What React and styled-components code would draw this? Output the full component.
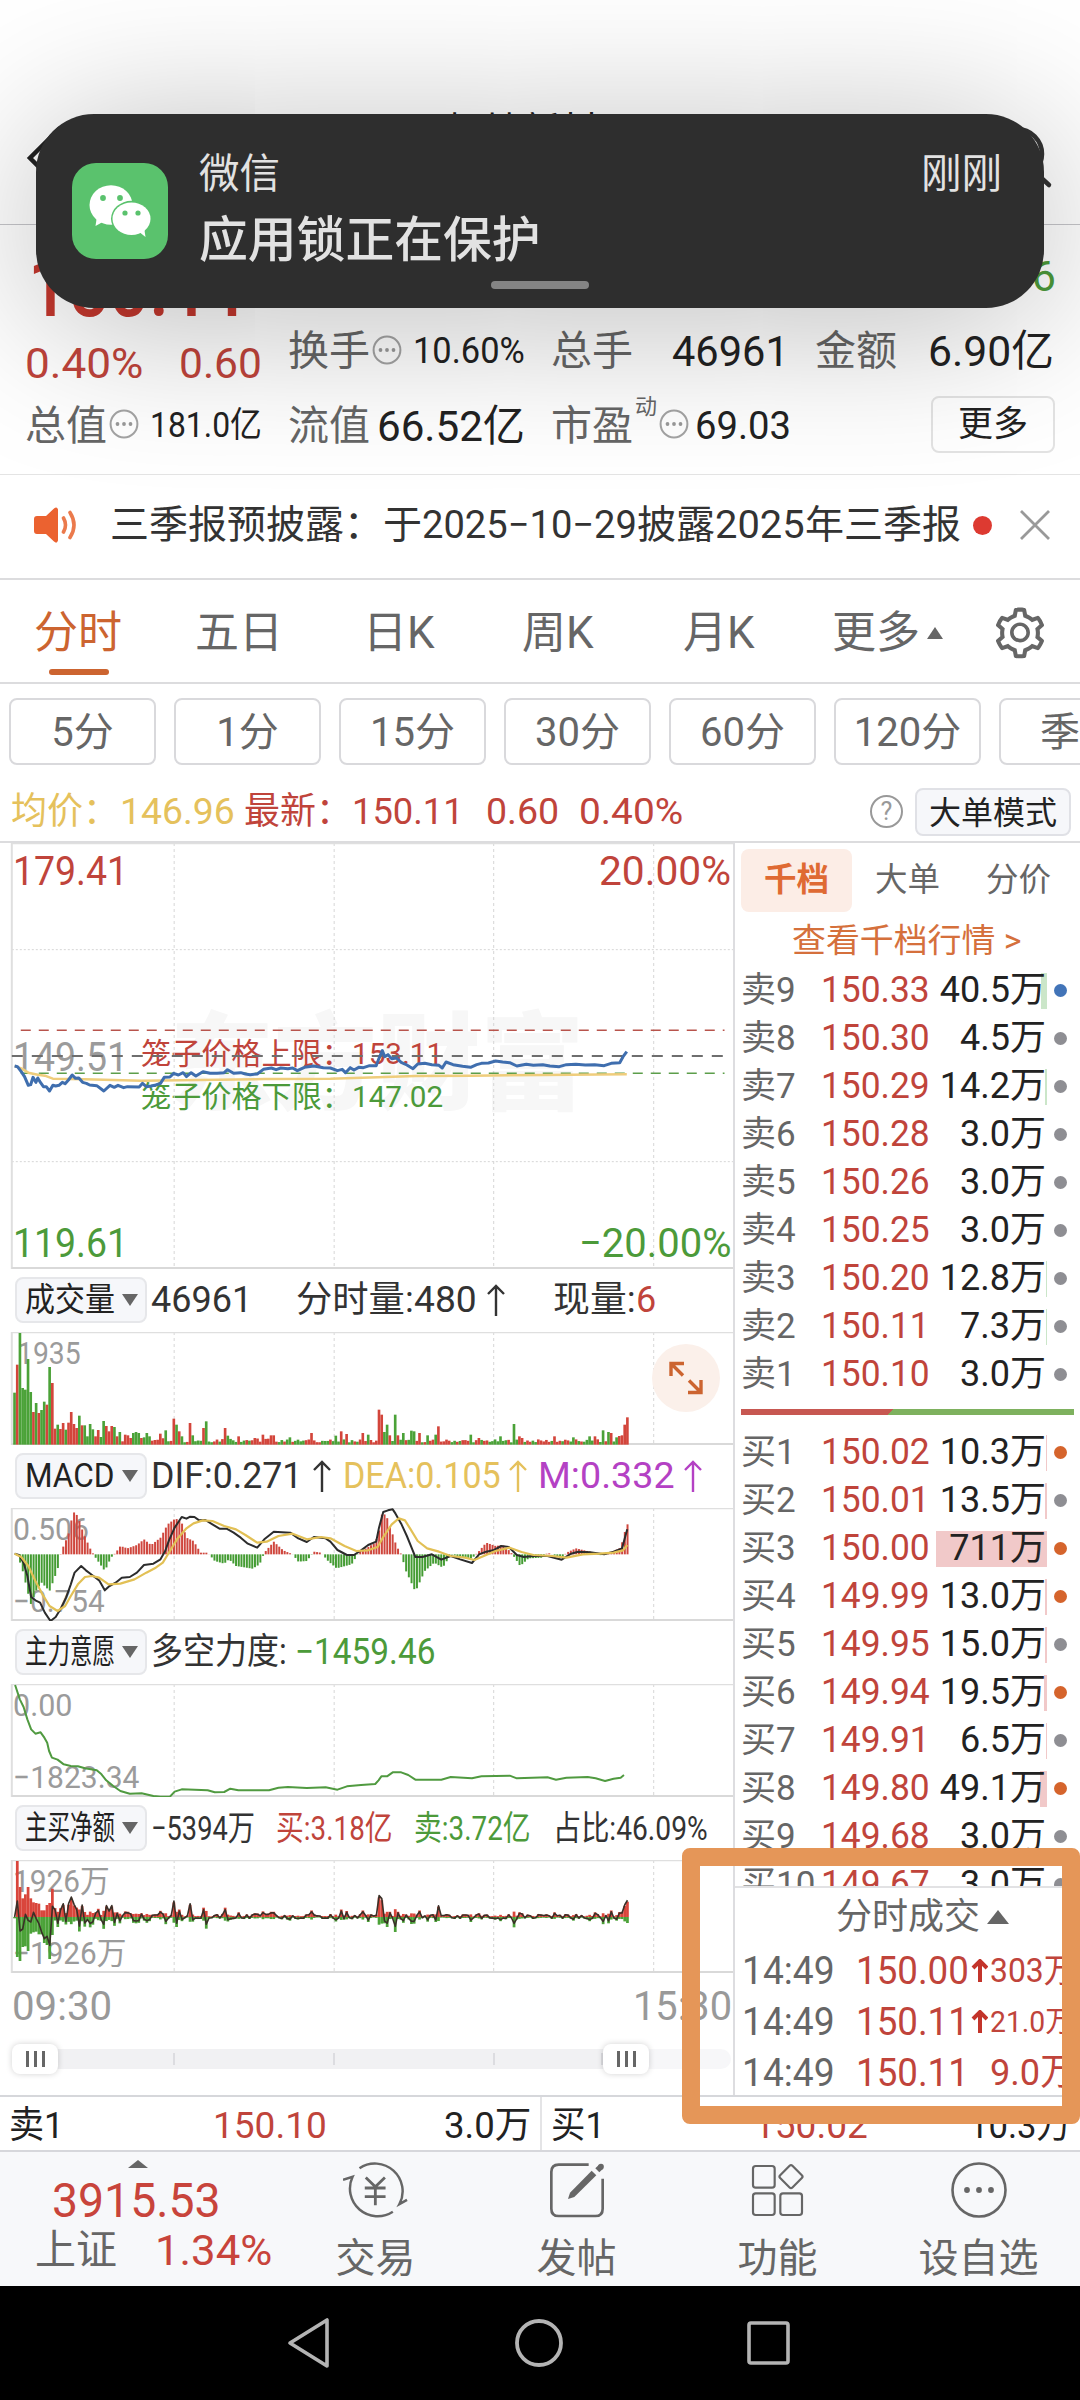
import { useLayoutEffect, useRef } from "react";
import styled, { createGlobalStyle } from "styled-components";
import { AiOutlineSetting } from "react-icons/ai";

const RED = "#c0443b";
const GREEN = "#4c9a3a";
const YELLOW = "#e5c15c";
const PURPLE = "#b441c4";
const ORANGE = "#cc6430";

const GlobalStyle = createGlobalStyle`
  * { box-sizing: border-box; }
  body {
    margin: 0;
    background: #fff;
    color: #222;
    font-family: Roboto, "Noto Sans CJK SC", sans-serif;
  }
`;

const Page = styled.div`
  position: relative;
  width: 1080px;
  height: 2400px;
  overflow: hidden;
  display: flex;
  flex-direction: column;
  background: #fff;
`;

/* ---------- text that is squeezed to a given width ---------- */

const FitBox = styled.span`
  display: inline-block;
  flex: none;
  width: ${(p) => p.$w}px;
  margin-left: ${(p) => p.$ml || 0}px;
  font-size: ${(p) => (p.$size ? p.$size + "px" : "inherit")};
  color: ${(p) => p.$color || "inherit"};
  font-weight: ${(p) => p.$weight || "inherit"};
  white-space: nowrap;
`;

const FitInner = styled.span`
  display: inline-block;
  transform-origin: 0 50%;
`;

function Fit({ w, ml, size, color, weight, children }) {
  const ref = useRef(null);
  useLayoutEffect(() => {
    const el = ref.current;
    el.style.transform = `translateX(-1px) scaleX(${w / el.offsetWidth})`;
  }, [w, children]);
  return (
    <FitBox $w={w} $ml={ml} $size={size} $color={color} $weight={weight}>
      <FitInner ref={ref}>{children}</FitInner>
    </FitBox>
  );
}

/* ---------- title bar ---------- */

const TitleBar = styled.header`
  flex: none;
  height: 225px;
  padding: 95px 27px 0 26px;
  display: flex;
  justify-content: space-between;
  align-items: flex-start;
  border-bottom: 1px solid #c6c6ca;
`;

const Title = styled.h1`
  margin: 11px 0 0;
  padding-right: 4px;
  font-size: 38px;
  line-height: 50px;
  font-weight: 400;
`;

/* ---------- quote ---------- */

const Quote = styled.section`
  flex: none;
  height: 250px;
  padding: 0 24px 0 26px;
  border-bottom: 1px solid #e4e4e4;
`;

const PriceRow = styled.div`
  display: flex;
  justify-content: space-between;
  height: 101px;
`;

const BigPrice = styled.div`
  padding: 16px 0 0 3px;
  line-height: 94px;
  color: #c5382e;
  font-weight: 500;
`;

const High = styled.div`
  padding-top: 26px;
  font-size: 43px;
  line-height: 50px;
  color: ${GREEN};
`;

const StatGrid = styled.div`
  display: grid;
  grid-template-columns: 237px 237px 238px 239px;
  column-gap: 26px;
  grid-template-rows: 50px 99px;
`;

const Stat = styled.div`
  display: flex;
  align-items: center;
  justify-content: ${(p) => (p.$start ? "flex-start" : "space-between")};
  padding-top: ${(p) => p.$pad || 0}px;
  font-size: ${(p) => p.$size || 43}px;
  line-height: 50px;
  color: ${(p) => p.$color || "#222"};
  white-space: nowrap;
`;

const Label = styled.span`
  display: flex;
  align-items: center;
  gap: 2px;
  margin-left: -1px;
  font-size: 41px;
  color: #666;

  svg {
    margin-top: -3px;
  }
`;

const Sup = styled.sup`
  font-size: 22px;
  line-height: 22px;
  margin: -38px 0 0 0;
`;

const MoreButton = styled.button`
  width: 124px;
  height: 57px;
  margin-left: auto;
  margin-top: -2px;
  border: 2px solid #e3e3e3;
  border-radius: 8px;
  background: transparent;
  font: inherit;
  font-size: 35px;
  color: #222;
  padding: 0;
`;

/* ---------- notice ---------- */

const Notice = styled.div`
  flex: none;
  height: 105px;
  padding: 0 28px 3px 33px;
  display: flex;
  align-items: center;
  border-bottom: 2px solid #dcdcde;
  color: #333;
  font-size: 39px;
  line-height: 50px;
`;

const Dot = styled.i`
  width: 19px;
  height: 19px;
  margin: 0 auto 0 11px;
  border-radius: 50%;
  background: #dd3a31;
`;

/* ---------- period tabs ---------- */

const Tabs = styled.nav`
  flex: none;
  height: 104px;
  padding: 3px 0 0 34px;
  display: flex;
  align-items: center;
  border-bottom: 2px solid #dcdcde;
  color: #666;
`;

const Tab = styled.div`
  position: relative;
  width: ${(p) => p.$w}px;
  display: flex;
  align-items: center;
  font-size: 44px;
  line-height: 60px;
  color: ${(p) => (p.$on ? ORANGE : "#666")};
  white-space: nowrap;

  &::after {
    content: "";
    display: ${(p) => (p.$on ? "block" : "none")};
    position: absolute;
    left: 15px;
    bottom: -12px;
    width: 60px;
    height: 6px;
    border-radius: 3px;
    background: ${ORANGE};
  }
`;

const Tri = styled.i`
  display: inline-block;
  flex: none;
  border: ${(p) => p.$half}px solid transparent;
  border-top: ${(p) => (p.$down ? `${p.$h}px solid #666` : 0)};
  border-bottom: ${(p) => (p.$down ? 0 : `${p.$h}px solid #666`)};
  margin-left: ${(p) => p.$ml || 0}px;
`;

const Chips = styled.div`
  flex: none;
  height: 98px;
  padding: 14px 0 0 9px;
  display: flex;
  gap: 18px;
  overflow: hidden;
`;

const Chip = styled.div`
  flex: none;
  width: 147px;
  height: 67px;
  border: 2px solid #d9d9dc;
  border-radius: 8px;
  font-size: 40px;
  line-height: 65px;
  text-align: center;
  color: #666;
`;

const AvgRow = styled.div`
  flex: none;
  height: 61px;
  padding: 0 9px 0 12px;
  display: flex;
  align-items: center;
  font-size: 37px;
  line-height: 50px;
  color: ${RED};
  border-bottom: 2px solid #dcdcde;
`;

const Help = styled.span`
  width: 33px;
  height: 33px;
  margin-left: auto;
  border: 2px solid #999;
  border-radius: 50%;
  font-size: 25px;
  line-height: 29px;
  text-align: center;
  color: #999;
`;

const ModeButton = styled.span`
  width: 156px;
  height: 48px;
  margin-left: 12px;
  border: 2px solid #e0e1e6;
  border-radius: 8px;
  background: #f6f7fa;
  font-size: 32px;
  line-height: 46px;
  text-align: center;
  color: #222;
`;

/* ---------- main: charts and order book ---------- */

const Main = styled.main`
  flex: none;
  height: 1254px;
  display: flex;
  border-bottom: 2px solid #d6d7db;
`;

const Charts = styled.section`
  width: 735px;
  display: flex;
  flex-direction: column;
  border-right: 2px solid #dddde0;
`;

const ChartBox = styled.div`
  position: relative;
  flex: none;
  height: ${(p) => p.$h}px;

  svg {
    position: relative;
    display: block;
  }
`;

const Watermark = styled.div`
  position: absolute;
  left: 171px;
  top: 142px;
  font-family: "Noto Sans CJK SC", sans-serif;
  font-size: 106px;
  line-height: 140px;
  font-weight: 900;
  color: #f7f7f7;
  white-space: nowrap;
`;

const Mark = styled.span`
  position: absolute;
  left: ${(p) => (p.$right ? "auto" : (p.$x || 14) + "px")};
  right: ${(p) => (p.$right ? "1px" : "auto")};
  top: ${(p) => p.$y}px;
  font-size: ${(p) => p.$size || 31}px;
  line-height: 40px;
  color: ${(p) => p.$color || "#9b9b9b"};
  white-space: nowrap;
`;

const Expand = styled.span`
  position: absolute;
  right: 13px;
  top: 12px;
  width: 68px;
  height: 68px;
  border-radius: 50%;
  background: #fbf0ea;
  display: grid;
  place-items: center;
`;

const Legend = styled.div`
  flex: none;
  height: 63px;
  padding: 8px 0 9px 15px;
  display: flex;
  align-items: center;
  font-size: ${(p) => p.$size || 36}px;
  line-height: 46px;
  color: #333;
`;

const Select = styled.span`
  width: 132px;
  height: 46px;
  margin-right: 5px;
  padding: 0 7px 0 9px;
  display: flex;
  align-items: center;
  justify-content: space-between;
  border: 2px solid #e6e7ea;
  border-radius: 8px;
  background: #f6f7fa;
  font-size: 33px;
  line-height: 42px;
  color: #222;
`;

const TimeAxis = styled.div`
  flex: none;
  height: 66px;
  padding: 5px 0 0 13px;
  display: flex;
  justify-content: space-between;
  font-size: 41px;
  line-height: 56px;
  color: #999;
`;

const Slider = styled.div`
  height: 20px;
  margin: 10px 2px 0 12px;
  display: flex;
  align-items: center;
  border-radius: 10px;
  background: linear-gradient(90deg, #f1f1f3 0 614px, #f7f7f9 614px);
`;

const Knob = styled.span`
  width: 46px;
  height: 30px;
  border-radius: 8px;
  background: #fff;
  box-shadow: 0 0 6px rgba(0, 0, 0, 0.18);
  display: flex;
  align-items: center;
  justify-content: center;
  gap: 5px;

  i {
    width: 3px;
    height: 16px;
    background: #666;
  }
`;

const Tick = styled.i`
  width: 2px;
  height: 12px;
  margin-left: ${(p) => p.$ml}px;
  background: #dcdce0;
`;

const Book = styled.aside`
  width: 345px;
  display: flex;
  flex-direction: column;
`;

const BookTabs = styled.div`
  flex: none;
  height: 65px;
  padding: 6px 15px 0 6px;
  display: grid;
  grid-template-columns: repeat(3, 111px);
`;

const BookTab = styled.span`
  border-radius: 8px;
  font-size: 32.5px;
  line-height: 63px;
  text-align: center;
  color: ${(p) => (p.$on ? "#df6a33" : "#666")};
  font-weight: ${(p) => (p.$on ? 700 : 400)};
  background: ${(p) => (p.$on ? "#fcede6" : "transparent")};
`;

const BookLink = styled.div`
  flex: none;
  height: 58px;
  padding-left: 58px;
  font-size: 33px;
  line-height: 66px;
  color: #d5703c;
`;

const Levels = styled.div`
  flex: 1;
  min-height: 0;
  overflow: hidden;
`;

const Level = styled.div`
  height: 48px;
  padding-left: 6px;
  display: grid;
  grid-template-columns: 81px 112px 113px 1fr;
  align-items: center;
  font-size: 36px;
  line-height: 49px;
  white-space: nowrap;
`;

const LevelName = styled.span`
  font-size: 35px;
  color: #666;
`;

const Qty = styled.span`
  height: 36px;
  padding-right: 1px;
  display: flex;
  align-items: center;
  justify-content: flex-end;
  background: linear-gradient(${(p) => p.$bg}, ${(p) => p.$bg}) no-repeat right / ${(p) => p.$bar}px 100%;
`;

const State = styled.i`
  width: 13px;
  height: 13px;
  margin-left: 7px;
  border-radius: 50%;
  background: ${(p) => p.$c};
`;

const Ratio = styled.div`
  height: 6px;
  margin: 11px 6px 13px;
  background: linear-gradient(135deg, #c75751 0 108px, #7eb15e 108px);
`;

const Trades = styled.div`
  flex: none;
  height: 209px;
  border-top: 2px solid #e2e2e4;
`;

const TradesHead = styled.div`
  height: 57px;
  padding-left: 102px;
  display: flex;
  align-items: center;
  font-size: 36px;
  line-height: 50px;
  color: #666;
`;

const Trade = styled.div`
  height: 51px;
  padding-left: 8px;
  display: flex;
  align-items: center;
  font-size: 38px;
  line-height: 50px;
  color: ${RED};
  overflow: hidden;
`;

/* ---------- bottom ---------- */

const BestRow = styled.div`
  flex: none;
  height: 55px;
  display: flex;
  border-bottom: 2px solid #d6d7db;
`;

const Best = styled.div`
  width: 540px;
  padding: 5px 8px 0 10px;
  display: flex;
  justify-content: space-between;
  align-items: center;
  font-size: 37px;
  line-height: 50px;

  & + & {
    border-left: 2px solid #e4e4e6;
  }
`;

const BottomNav = styled.nav`
  flex: none;
  height: 134px;
  display: grid;
  grid-template-columns: 275px repeat(4, 201px);
  background: #f7f8fa;
`;

const NavItem = styled.div`
  display: flex;
  flex-direction: column;
  align-items: center;
  padding-top: 8px;
  font-size: 40px;
  line-height: 54px;
  color: #666;

  svg {
    height: 60px;
    margin-bottom: 12px;
  }
`;

const IndexItem = styled.div`
  display: flex;
  flex-direction: column;
  align-items: center;
  padding-top: 8px;
  color: #c8443b;
`;

const IndexLine = styled.div`
  display: flex;
  align-items: center;
  padding-left: ${(p) => p.$pl || 0}px;
  font-size: ${(p) => p.$size}px;
  height: ${(p) => p.$h}px;
  line-height: 50px;
`;

const SystemBar = styled.footer`
  flex: 1;
  background: #000;
  padding: 30px 289px 0 287px;
  display: flex;
  justify-content: space-between;
`;

/* ---------- overlays ---------- */

const Toast = styled.div`
  position: absolute;
  left: 36px;
  top: 114px;
  width: 1008px;
  height: 194px;
  padding: 0 42px 0 36px;
  display: flex;
  align-items: center;
  border-radius: 58px;
  background: #2e2e2e;
  color: #e2e2e2;
  box-shadow: 0 14px 160px rgba(0, 0, 0, 0.28);
`;

const AppIcon = styled.span`
  width: 96px;
  height: 96px;
  border-radius: 24px;
  background: #5ac26d;
  overflow: hidden;
`;

const ToastBody = styled.div`
  flex: 1;
  padding: 0 0 0 31px;
`;

const ToastTop = styled.div`
  display: flex;
  justify-content: space-between;
  font-size: 40.5px;
  line-height: 60px;
`;

const ToastText = styled.div`
  font-size: 48.8px;
  line-height: 74px;
  font-weight: 500;
`;

const Grip = styled.i`
  position: absolute;
  left: 455px;
  bottom: 19px;
  width: 98px;
  height: 8px;
  border-radius: 4px;
  background: #848484;
`;

const Highlight = styled.div`
  position: absolute;
  left: 682px;
  top: 1848px;
  width: 398px;
  height: 276px;
  border: 18px solid #e59658;
  border-radius: 8px;
`;

/* ---------- chart data, in plot units ---------- */

const STEP = 5.72;
const COUNT = 228;
const GRID_X = [369, 708, 1046, 1385];

// negative values are falling minutes
const OPEN_VOLUME = [
  -156, 240, -335, -170, -165, -257, -158, 98, -125, 95, -104, -129, 120, -233, 185, 48, -60, 47, 65, -45, 66, 98,
  62, 50, -87, 58, -58, -25, -62, -46, 25, 44, -23, -71, 56, 40, 56, -53, 25, -38, 10, 30, 28, 20, -35, -38, -35, 20,
  -22, -35, -25, 12, 14,
];

const PEAKS = [
  [340, 33], [351, -43], [369, 78], [375, -60], [381, 40], [387, -25], [403, 65], [409, -28], [431, 50], [437, -70],
  [477, 50], [483, -27], [505, 25], [556, 30], [573, 28], [579, 28], [616, -22], [662, 35], [713, -27], [725, 40],
  [736, 32], [770, 35], [781, -30], [803, 105], [809, 90], [815, -38], [820, -60], [826, 28], [838, -90], [843, 28],
  [855, -35], [872, -42], [878, -40], [889, 35], [906, -28], [923, -30], [928, 55], [997, -30], [1012, 20],
  [1063, -25], [1091, -62], [1102, 25], [1108, 20], [1176, 25], [1216, -22], [1250, -25], [1261, 25], [1278, -43],
  [1289, -38], [1295, 35], [1306, -22], [1312, 26], [1318, 28], [1323, 60], [1328, 82],
];

function noise(i) {
  const n = Math.sin(i * 12.9898) * 43758.5453;
  return n - Math.floor(n);
}

const VOLUME = Array.from({ length: COUNT }, (_, i) => {
  if (i < OPEN_VOLUME.length) return OPEN_VOLUME[i];
  const size = 7 + noise(i) * (i < 100 ? 14 : 9);
  return noise(i + 500) > 0.5 ? size : -size;
});
PEAKS.forEach(([x, v]) => {
  VOLUME[Math.min(COUNT - 1, Math.round((x - 31) / STEP))] = v;
});

const MACD = [
  [31, 0], [37, 0], [48, -50], [65, -150], [76, -110], [88, -85], [105, -110], [122, -45], [128, 0], [133, 20],
  [145, 60], [155, 128], [165, 115], [175, 70], [190, 20], [200, -5], [222, -50], [235, -10], [245, 5], [255, 25],
  [270, 18], [290, 28], [305, 45], [320, 28], [340, 50], [355, 90], [372, 108], [385, 95], [395, 50], [410, 40],
  [425, 5], [440, 5], [455, -20], [475, -28], [485, -15], [500, -35], [535, -43], [550, -30], [560, 5], [580, 38],
  [600, 12], [620, 0], [632, -22], [650, -20], [665, 8], [680, 5], [695, -20], [713, -42], [745, -30], [760, 5],
  [795, 35], [803, 70], [810, 128], [820, 110], [840, 25], [850, 0], [860, -50], [880, -112], [900, -50],
  [920, -25], [938, -40], [955, 0], [975, -8], [1000, -12], [1015, 10], [1030, 35], [1050, 25], [1065, 28],
  [1080, 10], [1088, -5], [1102, -35], [1120, -12], [1150, -10], [1160, 5], [1190, -12], [1200, 5], [1220, 18],
  [1250, 8], [1270, -3], [1290, 3], [1315, 20], [1328, 90],
];

const PRICE =
  "31,708 37,710 45,725 52,740 60,766 65,764 70,742 76,757 80,744 86,758 92,770 98,770 105,783 112,766 118,768 125,766 132,757 138,761 145,750 153,735 160,745 167,744 175,757 183,760 190,765 205,767 220,783 233,766 242,772 250,766 262,773 270,770 295,771 302,760 310,770 320,768 330,765 340,760 348,742 360,741 368,730 378,735 388,728 395,740 405,728 415,738 430,725 445,730 460,730 475,728 482,719 495,730 510,728 520,732 530,734 545,732 558,718 575,714 585,719 595,714 610,716 620,714 630,722 645,712 665,708 685,713 700,714 715,722 725,718 732,728 742,713 750,720 760,712 770,713 783,707 797,707 803,685 810,662 815,680 822,674 830,686 840,684 850,697 862,705 875,716 885,702 900,700 915,704 930,706 937,714 945,696 960,704 980,709 997,712 1010,704 1020,700 1035,699 1050,693 1065,696 1080,698 1095,708 1115,703 1130,706 1150,704 1165,708 1185,710 1200,704 1220,703 1240,705 1260,704 1280,707 1295,700 1313,698 1320,680 1328,665";
const AVG = "31,708 45,715 60,728 80,734 95,737 112,746 180,748 300,752 420,750 560,747 700,746 800,742 880,738 1000,737 1150,735 1328,733";
const DIF =
  "31,878 40,882 50,905 58,945 66,1008 75,1018 85,1025 95,1055 107,1080 118,1068 128,1045 140,1010 150,970 158,935 172,915 182,928 195,942 210,958 222,988 232,975 245,965 258,950 275,948 290,935 305,912 325,908 340,895 350,870 358,838 370,800 385,768 395,773 403,767 412,768 422,778 435,777 450,790 465,803 480,803 495,815 510,830 525,848 545,860 560,835 580,812 615,815 632,832 650,843 665,828 690,832 700,842 715,867 735,882 750,882 765,868 780,852 797,842 803,800 812,753 822,748 832,745 838,758 850,788 862,825 872,860 880,888 895,888 915,880 935,896 955,885 975,895 1000,906 1015,880 1030,872 1045,868 1062,855 1078,858 1095,882 1110,888 1130,885 1160,885 1190,896 1210,878 1225,872 1250,874 1280,880 1300,872 1318,862 1324,830 1329,805";
const DEA =
  "31,878 45,888 60,915 75,960 90,1000 105,1035 122,1050 138,1035 150,1005 165,970 180,948 195,945 210,950 230,970 255,968 285,955 310,935 330,920 345,905 360,870 375,835 395,802 410,787 430,778 450,780 475,795 500,805 520,822 545,845 565,842 590,825 620,818 650,835 680,828 700,832 730,855 755,870 780,868 800,858 812,828 830,790 845,772 858,778 870,805 885,840 905,862 930,872 955,885 985,890 1005,897 1025,885 1050,870 1080,860 1105,873 1130,882 1170,885 1200,890 1235,880 1270,878 1300,875 1320,868 1329,852";
const FORCE =
  "32,222 42,265 50,288 58,325 66,355 75,368 86,364 94,380 100,395 104,420 110,440 122,446 135,460 150,465 165,466 180,472 205,478 215,490 225,508 240,525 255,540 275,548 300,547 325,555 340,557 360,557 370,542 385,535 440,538 455,544 475,543 488,533 505,538 570,538 590,530 610,528 650,531 690,529 715,536 735,526 765,522 795,519 802,508 808,496 820,496 832,484 850,484 865,492 880,506 935,506 955,498 1000,502 1020,496 1080,494 1095,502 1160,499 1178,506 1200,500 1245,498 1262,502 1282,510 1300,503 1315,500 1322,492";

function at(points, x) {
  const k = points.findIndex((p) => p[0] >= x);
  if (k <= 0) return points[k === 0 ? 0 : points.length - 1][1];
  const [x0, y0] = points[k - 1];
  const [x1, y1] = points[k];
  return y0 + ((y1 - y0) * (x - x0)) / (x1 - x0);
}

// buying and selling part of the first minutes
const OPEN_NET = [
  [0, 4], [168, 120], [90, 132], [56, 90], [68, 88], [90, 102], [56, 50], [44, 46], [42, 44], [40, 52], [20, 52],
  [20, 78], [36, 84], [42, 126], [85, 54],
];

const NET = VOLUME.map((v, i) => {
  if (i < OPEN_NET.length) return OPEN_NET[i];
  const a = Math.abs(v);
  return v > 0 ? [a * 0.56, a * 0.22] : [a * 0.26, a * 0.5];
});

const OPEN_NET_LINE = [0, 48, -42, -36, 8, -10, -15, 14, -5, -20, -45, -65, -58, -85, 32];

function Line({ points, color, width = 2.5 }) {
  return (
    <polyline
      points={points}
      fill="none"
      stroke={color}
      strokeWidth={width}
      strokeLinejoin="round"
      vectorEffect="non-scaling-stroke"
    />
  );
}

function Plot({ top, h, rows = [], children }) {
  const bottom = top + h * 3;
  return (
    <svg width="733" height={h} viewBox={`0 ${top} 1553 ${h * 3}`} preserveAspectRatio="none">
      {GRID_X.map((x) => (
        <path key={x} d={`M${x} ${top}V${bottom}`} stroke="#d6d6d6" strokeDasharray="3 3" vectorEffect="non-scaling-stroke" />
      ))}
      {rows.map((y) => (
        <path key={y} d={`M25 ${y}H1553`} stroke="#d6d6d6" strokeDasharray="2 2" vectorEffect="non-scaling-stroke" />
      ))}
      <path d={`M25 ${top + 1}H1553`} stroke="#dfdfdf" strokeWidth="2" vectorEffect="non-scaling-stroke" />
      <path d={`M25 ${top}V${bottom}`} stroke="#dfdfdf" strokeWidth="2" vectorEffect="non-scaling-stroke" />
      <path d={`M25 ${bottom - 3}H1553`} stroke="#d9d9d9" strokeWidth="2" vectorEffect="non-scaling-stroke" />
      {children}
    </svg>
  );
}

function Dashed({ y, color, width = 1.5, from = 44, dash = "10 8" }) {
  return <path d={`M${from} ${y}H1535`} stroke={color} strokeWidth={width} strokeDasharray={dash} vectorEffect="non-scaling-stroke" />;
}

function VolumeBars() {
  return VOLUME.map((v, i) => (
    <rect key={i} x={28 + i * STEP} y={551 - Math.abs(v)} width="5.6" height={Math.abs(v)} fill={v > 0 ? "#d3453b" : "#4ba238"} />
  ));
}

function MacdBars() {
  return VOLUME.map((_, i) => {
    const x = 31 + i * STEP;
    const v = at(MACD, x);
    return <rect key={i} x={x - 2} y={v > 0 ? 880 - v : 880} width="4.2" height={Math.abs(v)} fill={v > 0 ? "#cf463d" : "#449c33"} />;
  });
}

function netLineY(up, down, i) {
  if (i < OPEN_NET_LINE.length) return 918 - OPEN_NET_LINE[i];
  return 918 - (up - down) * (up > 30 ? 1.8 : 1.3);
}

function NetBars() {
  return (
    <>
      {NET.map(([up, down], i) => (
        <g key={i}>
          <rect x={28 + i * STEP} y={918 - up} width="5.8" height={up} fill="#d9453b" />
          <rect x={28 + i * STEP} y={918} width="5.8" height={down} fill="#4ba238" />
        </g>
      ))}
      <Line
        color="#3a3028"
        width={1.6}
        points={NET.map(([up, down], i) => `${31 + i * STEP},${netLineY(up, down, i)}`).join(" ")}
      />
    </>
  );
}

/* ---------- small icons ---------- */

function Up({ w = 18, h = 32, sw = 2.4, ml = 0, color = "currentColor" }) {
  return (
    <svg width={w + ml} height={h} viewBox={`${-ml} 0 ${w + ml} ${h}`} fill="none" stroke={color} strokeWidth={sw}>
      <path d={`M${w / 2} 2V${h}M1 ${w / 2 + 1}L${w / 2} 2L${w - 1} ${w / 2 + 1}`} />
    </svg>
  );
}

function Info() {
  return (
    <svg width="30" height="30" viewBox="0 0 30 30">
      <circle cx="15" cy="15" r="13.4" fill="none" stroke="#a4a4a4" strokeWidth="2" />
      <g fill="#999">
        <circle cx="8.5" cy="15" r="1.9" />
        <circle cx="15" cy="15" r="1.9" />
        <circle cx="21.5" cy="15" r="1.9" />
      </g>
    </svg>
  );
}

function Speaker() {
  return (
    <svg width="45" height="38" viewBox="0 0 45 38">
      <path d="M4 10h9L21 2.600q3-2.600 4 1v31q-1 3.500-4 1L13 28H4q-3 0-3-3V13q0-3 3-3z" fill="#eb6230" />
      <path d="M30.500 12q4 7 0 14M37 6.500q8 12.500 0 25" fill="none" stroke="#eb7a4c" strokeWidth="3.600" strokeLinecap="round" />
    </svg>
  );
}

function WeChat() {
  return (
    <svg width="96" height="96" viewBox="0 0 96 96">
      <path d="M25 53l-1.500 10 9-5z" fill="#fff" />
      <ellipse cx="39" cy="42" rx="21.500" ry="19.800" fill="#fff" />
      <ellipse cx="59.500" cy="55.800" rx="20.500" ry="18" fill="#5ac26d" />
      <ellipse cx="59.500" cy="55.800" rx="19" ry="16.300" fill="#fff" />
      <path d="M66 68l7.500 6-1.500-10z" fill="#fff" />
      <g fill="#5ac26d">
        <circle cx="31" cy="35" r="2.900" />
        <circle cx="48" cy="35" r="2.900" />
        <circle cx="53" cy="50" r="2.600" />
        <circle cx="66" cy="50" r="2.600" />
      </g>
    </svg>
  );
}

function TradeIcon() {
  return (
    <svg width="66" viewBox="69 44 200 180" fill="none" stroke="#666" strokeWidth="7.500">
      <path d="M119 68A84 84 0 0 1 240 177l23-13M220 200A84 84 0 0 1 98 94l-29 9" />
      <path d="M138 96l29 28 29-28M135 128H198M135 154H198M167 124V180" strokeWidth="8.500" />
    </svg>
  );
}

function PostIcon() {
  return (
    <svg width="60" viewBox="681 44 180 180" fill="none" stroke="#666" strokeWidth="8">
      <path d="M806 58H716Q694 58 694 80V190Q694 212 716 212H826Q848 212 848 190V100" />
      <path d="M744 161l6-19 65-66 14 14-66 65z" fill="#666" stroke="none" />
      <path d="M832 75l11-11" strokeWidth="17" />
      <circle cx="843" cy="64" r="8.500" fill="#666" stroke="none" />
    </svg>
  );
}

function AppsIcon() {
  return (
    <svg width="60" viewBox="1286 44 180 180" fill="none" stroke="#666" strokeWidth="6.500">
      <rect x="1301" y="62" width="65" height="65" rx="8" />
      <rect x="1301" y="144" width="65" height="65" rx="8" />
      <rect x="1383" y="144" width="65" height="65" rx="8" />
      <rect x="1389" y="68" width="52" height="52" rx="6" transform="rotate(45 1415 94)" />
    </svg>
  );
}

function MoreIcon() {
  return (
    <svg width="60" viewBox="0 0 60 60">
      <circle cx="30" cy="30" r="26.500" fill="none" stroke="#666" strokeWidth="2.600" />
      <g fill="#666">
        <circle cx="18" cy="30" r="2.900" />
        <circle cx="30" cy="30" r="2.900" />
        <circle cx="42" cy="30" r="2.900" />
      </g>
    </svg>
  );
}

/* ---------- order book data ---------- */

const GREY = "#8e8e93";
const HOT = "#d5642c";

const SELLS = [
  ["卖9", "150.33", "40.5万", 6, "#4274b8"],
  ["卖8", "150.30", "4.5万", 0, GREY],
  ["卖7", "150.29", "14.2万", 2, GREY],
  ["卖6", "150.28", "3.0万", 0, GREY],
  ["卖5", "150.26", "3.0万", 0, GREY],
  ["卖4", "150.25", "3.0万", 0, GREY],
  ["卖3", "150.20", "12.8万", 1, GREY],
  ["卖2", "150.11", "7.3万", 1, GREY],
  ["卖1", "150.10", "3.0万", 0, GREY],
];

const BUYS = [
  ["买1", "150.02", "10.3万", 1, HOT],
  ["买2", "150.01", "13.5万", 2, GREY],
  ["买3", "150.00", "711万", 111, HOT],
  ["买4", "149.99", "13.0万", 2, HOT],
  ["买5", "149.95", "15.0万", 2, GREY],
  ["买6", "149.94", "19.5万", 3, HOT],
  ["买7", "149.91", "6.5万", 1, GREY],
  ["买8", "149.80", "49.1万", 7, HOT],
  ["买9", "149.68", "3.0万", 0, GREY],
  ["买10", "149.67", "3.0万", 0, GREY],
];

function LevelRow({ row, bg }) {
  const [name, price, qty, bar, dot] = row;
  return (
    <Level>
      <LevelName>{name}</LevelName>
      <Fit w={109} color={RED}>{price}</Fit>
      <Qty $bg={bg} $bar={bar}>{qty}</Qty>
      <State $c={dot} />
    </Level>
  );
}

function Picker({ children }) {
  return (
    <Select>
      <Fit w={90}>{children}</Fit>
      <Tri $down $half={8} $h={12} />
    </Select>
  );
}

export default function App() {
  return (
    <Page>
      <GlobalStyle />

      <TitleBar>
        <svg width="40" height="98" viewBox="0 0 40 98" fill="none" stroke="#222" strokeWidth="4.500">
          <path d="M34 33L4 63 34 93" />
        </svg>
        <Title>恒坤新材</Title>
        <svg width="70" height="98" viewBox="0 0 70 98" fill="none" stroke="#333" strokeWidth="4.500" strokeLinecap="round">
          <circle cx="34" cy="59" r="25" />
          <path d="M52 77l14 13" />
        </svg>
      </TitleBar>

      <Quote>
        <PriceRow>
          <BigPrice>
            <Fit w={222} size={82}>150.11</Fit>
          </BigPrice>
          <High>144.56</High>
        </PriceRow>
        <StatGrid>
          <Stat $pad={23} $color={RED}>
            <Fit w={118}>0.40%</Fit>
            <Fit w={83}>0.60</Fit>
          </Stat>
          <Stat $size={36}>
            <Label>换手<Info /></Label>
            <Fit w={112}>10.60%</Fit>
          </Stat>
          <Stat>
            <Label>总手</Label>
            <Fit w={117}>46961</Fit>
          </Stat>
          <Stat>
            <Label>金额</Label>
            <Fit w={126}>6.90亿</Fit>
          </Stat>
          <Stat $size={35}>
            <Label>总值<Info /></Label>
            <Fit w={112}>181.0亿</Fit>
          </Stat>
          <Stat>
            <Label>流值</Label>
            <Fit w={148}>66.52亿</Fit>
          </Stat>
          <Stat $start $size={39}>
            <Label>市盈<Sup>动</Sup><Info /></Label>
            <Fit w={96} ml={7}>69.03</Fit>
          </Stat>
          <Stat>
            <MoreButton>更多</MoreButton>
          </Stat>
        </StatGrid>
      </Quote>

      <Notice>
        <Speaker />
        <Fit w={273} ml={33}>三季报预披露：</Fit>
        <Fit w={39}>于</Fit>
        <Fit w={215}>2025−10−29</Fit>
        <Fit w={78}>披露</Fit>
        <Fit w={90}>2025</Fit>
        <Fit w={156}>年三季报</Fit>
        <Dot />
        <svg width="34" height="34" viewBox="0 0 34 34" fill="none" stroke="#999" strokeWidth="2.800">
          <path d="M3 3l28 28M31 3L3 31" />
        </svg>
      </Notice>

      <Tabs>
        <Tab $w={161} $on>分时</Tab>
        <Tab $w={168}>五日</Tab>
        <Tab $w={159}>日K</Tab>
        <Tab $w={161}>周K</Tab>
        <Tab $w={149}>月K</Tab>
        <Tab $w={159}>更多<Tri $half={8} $h={12} $ml={7} /></Tab>
        <AiOutlineSetting size={58} />
      </Tabs>

      <Chips>
        {["5分", "1分", "15分", "30分", "60分", "120分", "季K"].map((c) => (
          <Chip key={c}>{c}</Chip>
        ))}
      </Chips>

      <AvgRow>
        <Fit w={108} color={YELLOW}>均价：</Fit>
        <Fit w={115} ml={1} color={YELLOW}>146.96</Fit>
        <Fit w={108} ml={9}>最新：</Fit>
        <Fit w={112}>150.11</Fit>
        <Fit w={73} ml={22}>0.60</Fit>
        <Fit w={104} ml={20}>0.40%</Fit>
        <Help>?</Help>
        <ModeButton>大单模式</ModeButton>
      </AvgRow>

      <Main>
        <Charts>
          <ChartBox $h={426}>
            <Watermark>
              <Fit w={414}>东方财富</Fit>
            </Watermark>
            <Mark $y={8} $color={RED}><Fit w={115} size={41}>179.41</Fit></Mark>
            <Mark $y={8} $right $color={RED}><Fit w={132} size={41}>20.00%</Fit></Mark>
            <Mark $y={194}><Fit w={115} size={41}>149.51</Fit></Mark>
            <Mark $y={191} $x={142} $size={30} $color={RED}>
              <Fit w={211}>笼子价格上限：</Fit>
              <Fit w={91}>153.11</Fit>
            </Mark>
            <Mark $y={234} $x={142} $size={30} $color={GREEN}>
              <Fit w={211}>笼子价格下限：</Fit>
              <Fit w={91}>147.02</Fit>
            </Mark>
            <Mark $y={380} $color={GREEN}><Fit w={115} size={41}>119.61</Fit></Mark>
            <Mark $y={380} $right $color={GREEN}><Fit w={152} size={41}>−20.00%</Fit></Mark>
            <Plot top={39} h={426} rows={[359, 995]}>
              <Dashed y={601} color="#b8544c" />
              <Dashed y={678} color="#6e6e6e" width={2} from={25} dash="11 9" />
              <Dashed y={730} color="#5c9e4a" />
              <Line points={AVG} color="#efcd7c" />
              <Line points={PRICE} color="#3f6eae" width={3} />
            </Plot>
          </ChartBox>

          <Legend>
            <Picker>成交量</Picker>
            <Fit w={101}>46961</Fit>
            <Fit w={118} ml={44}>分时量:</Fit>
            <Fit w={63}>480</Fit>
            <Up ml={9} />
            <Fit w={83} ml={49}>现量:</Fit>
            <Fit w={20} color={RED}>6</Fit>
          </Legend>
          <ChartBox $h={113}>
            <Mark $y={2} $x={18}><Fit w={64}>1935</Fit></Mark>
            <Plot top={213} h={113}>
              <VolumeBars />
            </Plot>
            <Expand>
              <svg width="34" height="34" viewBox="0 0 34 34" fill="none" stroke={ORANGE} strokeWidth="3.400">
                <path d="M2 15V2.500H15M2.500 3L14 14.500M32 19V31.500H19M31.500 31L20 19.500" />
              </svg>
            </Expand>
          </ChartBox>

          <Legend>
            <Picker>MACD</Picker>
            <Fit w={151}>DIF:0.271</Fit>
            <Up ml={10} />
            <Fit w={158} ml={13} color={YELLOW}>DEA:0.105</Fit>
            <Up ml={7} color={YELLOW} />
            <Fit w={137} ml={12} color={PURPLE}>M:0.332</Fit>
            <Up ml={8} color={PURPLE} />
          </Legend>
          <ChartBox $h={113}>
            <Mark $y={2}><Fit w={76}>0.506</Fit></Mark>
            <Mark $y={74}><Fit w={92}>−0.754</Fit></Mark>
            <Plot top={741} h={113}>
              <MacdBars />
              <Line points={DIF} color="#2c2c2c" width={2} />
              <Line points={DEA} color="#e2c055" width={2.2} />
            </Plot>
          </ChartBox>

          <Legend>
            <Picker>主力意愿</Picker>
            <Fit w={136}>多空力度:</Fit>
            <Fit w={140} ml={8} color={GREEN}>−1459.46</Fit>
          </Legend>
          <ChartBox $h={113}>
            <Mark $y={2}><Fit w={59}>0.00</Fit></Mark>
            <Mark $y={74}><Fit w={126}>−1823.34</Fit></Mark>
            <Plot top={219} h={113}>
              <Line points={FORCE} color="#509a40" width={2} />
            </Plot>
          </ChartBox>

          <Legend $size={34}>
            <Picker>主买净额</Picker>
            <Fit w={104}>−5394万</Fit>
            <Fit w={117} ml={21} color={RED}>买:3.18亿</Fit>
            <Fit w={117} ml={21} color={GREEN}>卖:3.72亿</Fit>
            <Fit w={155} ml={22}>占比:46.09%</Fit>
          </Legend>
          <ChartBox $h={113}>
            <Mark $y={2}><Fit w={97}>1926万</Fit></Mark>
            <Mark $y={74}><Fit w={113}>−1926万</Fit></Mark>
            <Plot top={747} h={113}>
              <NetBars />
            </Plot>
          </ChartBox>

          <TimeAxis>
            <Fit w={100}>09:30</Fit>
            <Fit w={99}>15:30</Fit>
          </TimeAxis>
          <Slider>
            <Knob><i /><i /><i /></Knob>
            <Tick $ml={115} />
            <Tick $ml={158} />
            <Tick $ml={158} />
            <Tick $ml={106} />
            <Knob><i /><i /><i /></Knob>
          </Slider>
        </Charts>

        <Book>
          <BookTabs>
            <BookTab $on>千档</BookTab>
            <BookTab>大单</BookTab>
            <BookTab>分价</BookTab>
          </BookTabs>
          <BookLink>
            <Fit w={229}>查看千档行情 &gt;</Fit>
          </BookLink>
          <Levels>
            {SELLS.map((r) => (
              <LevelRow key={r[0]} row={r} bg="#cbe6c9" />
            ))}
            <Ratio />
            {BUYS.map((r) => (
              <LevelRow key={r[0]} row={r} bg="#f1c9c9" />
            ))}
          </Levels>
          <Trades>
            <TradesHead>
              <Fit w={144}>分时成交</Fit>
              <Tri $half={11} $h={14} $ml={6} />
            </TradesHead>
            <Trade>
              <Fit w={93} color="#666">14:49</Fit>
              <Fit w={113} ml={21}>150.00</Fit>
              <Up w={16} ml={2} h={23} sw={4} color="#c3342b" />
              <Fit w={86} ml={3} size={33}>303万</Fit>
            </Trade>
            <Trade>
              <Fit w={93} color="#666">14:49</Fit>
              <Fit w={113} ml={21}>150.11</Fit>
              <Up w={16} ml={2} h={23} sw={4} color="#c3342b" />
              <Fit w={84} ml={3} size={29}>21.0万</Fit>
            </Trade>
            <Trade>
              <Fit w={93} color="#666">14:49</Fit>
              <Fit w={113} ml={21}>150.11</Fit>
              <Fit w={86} ml={21} size={37}>9.0万</Fit>
            </Trade>
          </Trades>
        </Book>
      </Main>

      <BestRow>
        <Best>
          <Fit w={55}>卖1</Fit>
          <Fit w={114} ml={32} color={RED}>150.10</Fit>
          <Fit w={87}>3.0万</Fit>
        </Best>
        <Best>
          <Fit w={54}>买1</Fit>
          <Fit w={114} ml={48} color={RED}>150.02</Fit>
          <Fit w={102}>10.3万</Fit>
        </Best>
      </BestRow>

      <BottomNav>
        <IndexItem>
          <Tri $half={10} $h={8} />
          <IndexLine $size={48} $h={66}>
            <Fit w={169}>3915.53</Fit>
          </IndexLine>
          <IndexLine $size={43} $h={32} $pl={34}>
            <Fit w={82} size={41} color="#666">上证</Fit>
            <Fit w={117} ml={38}>1.34%</Fit>
          </IndexLine>
        </IndexItem>
        <NavItem><TradeIcon />交易</NavItem>
        <NavItem><PostIcon />发帖</NavItem>
        <NavItem><AppsIcon />功能</NavItem>
        <NavItem><MoreIcon />设自选</NavItem>
      </BottomNav>

      <SystemBar>
        <svg width="44" height="52" viewBox="0 0 44 52" fill="none" stroke="#b4b4b4" strokeWidth="3.600" strokeLinejoin="round">
          <path d="M40 4V50L3 27z" />
        </svg>
        <svg width="50" height="54" viewBox="0 0 50 54" fill="none" stroke="#b4b4b4" strokeWidth="3.800">
          <circle cx="26" cy="27" r="22" />
        </svg>
        <svg width="46" height="54" viewBox="0 0 46 54" fill="none" stroke="#b4b4b4" strokeWidth="3.600">
          <rect x="4" y="7" width="39" height="40" rx="2" />
        </svg>
      </SystemBar>

      <Toast>
        <AppIcon><WeChat /></AppIcon>
        <ToastBody>
          <ToastTop>
            <span>微信</span>
            <span>刚刚</span>
          </ToastTop>
          <ToastText>应用锁正在保护</ToastText>
        </ToastBody>
        <Grip />
      </Toast>
      <Highlight />
    </Page>
  );
}
